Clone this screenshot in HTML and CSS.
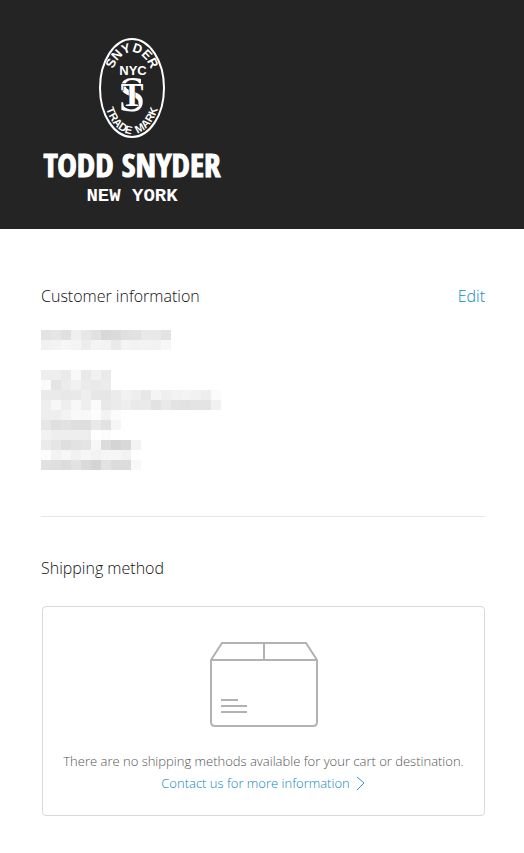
FILE: index.html
```html
<!DOCTYPE html>
<html lang="en">
<head>
    <meta charset="UTF-8">
    <meta name="viewport" content="width=device-width, initial-scale=1.0">
    <title>Todd Snyder - Checkout</title>
    <link rel="stylesheet" href="styles.css">
</head>
<body>
    <header class="banner">
        <a class="logo-link" href="#" aria-label="Todd Snyder New York">
            <svg class="logo" width="182" height="168" viewBox="0 0 182 168">
                <defs>
                    <path id="arc-top" d="M 68 50 A 22 36 0 0 1 112 50"></path>
                    <path id="arc-bottom" d="M 61 50 A 29 46 0 0 0 119 50"></path>
                </defs>
                <ellipse class="logo-ring" cx="90" cy="50" rx="32" ry="49"></ellipse>
                <text class="logo-arc-top"><textPath href="#arc-top" startOffset="50%">SNYDER</textPath></text>
                <text class="logo-nyc" x="91" y="37">NYC</text>
                <text class="logo-s" x="90" y="73">S</text>
                <text class="logo-t" x="90" y="68">T</text>
                <text class="logo-arc-bottom"><textPath href="#arc-bottom" startOffset="50%">TRADE&#160; MARK</textPath></text>
                <text class="logo-name" x="90" y="139">TODD SNYDER</text>
                <text class="logo-city" x="90" y="163">NEW YORK</text>
            </svg>
        </a>
    </header>

    <main class="content">
        <section class="customer">
            <div class="section-header">
                <h2>Customer information</h2>
                <a href="#">Edit</a>
            </div>
            <svg class="redacted" id="customer-email" width="180" height="20"></svg>
            <svg class="redacted" id="customer-address" width="180" height="100"></svg>
        </section>

        <section class="shipping">
            <h2>Shipping method</h2>
            <div class="blank-slate">
                <svg class="box-icon" width="108" height="86" viewBox="0 0 108 86">
                    <path d="M1 18 L12 1 H96 L107 18 V80 Q107 84 103 84 H5 Q1 84 1 80 Z M1 18 H107 M54 1 V18"></path>
                    <path d="M11 58 H28 M11 64 H37 M11 70 H37"></path>
                </svg>
                <p>There are no shipping methods available for your cart or destination.</p>
                <a class="contact-link" href="#">Contact us for more information
                    <svg class="chevron" width="10" height="16" viewBox="0 0 10 16">
                        <path d="M1 2 L8 8 L1 15"></path>
                    </svg>
                </a>
            </div>
        </section>
    </main>

    <script src="script.js"></script>
</body>
</html>
```

FILE: styles.css
```css
body {
    margin: 0;
    background-color: #fff;
    color: #111;
    font-family: "Open Sans", Lato, sans-serif;
    font-size: 13px;
    font-weight: 300;
    line-height: 22px;
}

a {
    color: #1088c0;
    text-decoration: none;
}

h2 {
    margin: 0;
    font-size: 16px;
    font-weight: 300;
    line-height: 24px;
}

.banner {
    background-color: #242424;
    padding: 38px 40px 23px 42px;
}

.logo-link,
.logo {
    display: block;
}

.logo {
    overflow: visible;
}

.logo text {
    fill: #fff;
    font-family: "Liberation Sans", Arial, sans-serif;
    font-weight: bold;
    text-anchor: middle;
}

.logo-ring {
    fill: none;
    stroke: #fff;
    stroke-width: 2;
}

.logo .logo-arc-top {
    font-size: 13px;
}

.logo .logo-arc-bottom {
    font-size: 11px;
}

.logo .logo-nyc {
    font-size: 13px;
}

.logo .logo-s {
    font-family: "Liberation Serif", serif;
    font-size: 50px;
    font-weight: normal;
}

.logo .logo-t {
    font-family: "Liberation Serif", serif;
    font-size: 34px;
    stroke: #242424;
    stroke-width: 1;
    paint-order: stroke;
}

.logo .logo-name {
    font-family: "Liberation Sans Narrow", "Open Sans Condensed", "Roboto Condensed", sans-serif;
    font-size: 33px;
    stroke: #fff;
    stroke-width: 1;
}

.logo .logo-city {
    font-family: "Liberation Mono", monospace;
    font-size: 19px;
}

.content {
    padding: 55px 39px 37px 41px;
}

.customer {
    border-bottom: 1px solid #e6e6e6;
    padding-bottom: 46px;
    margin-bottom: 39px;
}

.section-header {
    display: flex;
    justify-content: space-between;
    align-items: center;
    margin-bottom: 22px;
}

.section-header a {
    font-size: 16px;
}

.redacted {
    display: block;
    shape-rendering: crispEdges;
}

.redacted + .redacted {
    margin-top: 20px;
}

.blank-slate {
    display: flex;
    flex-direction: column;
    align-items: center;
    margin: 26px 0 0 1px;
    padding: 35px 12px 21px;
    border: 1px solid #d9d9d9;
    border-radius: 4px;
    color: #555;
    text-align: center;
}

.blank-slate p {
    margin: 22px 0 0;
}

.box-icon {
    fill: none;
    stroke: #b2b2b2;
    stroke-width: 2;
}

.contact-link {
    display: flex;
    align-items: center;
    gap: 6px;
}

.chevron {
    fill: none;
    stroke: #2a9dcc;
}
```

FILE: script.js
```js
// grey level of every 10px block, one string per line
const email = [
    'e3 e6 e0 f0 e7 e1 d8 db e0 e2 e9 e9 e3',
    'f1 f3 f6 f4 ed f4 f3 ea f4 f2 f3 f2 f7'
];

const address = [
    'ee ee ea f9 e9 f1 ea',
    'fa e4 eb f1 eb ea ec',
    'ea ea e8 e9 ee e7 e6 eb f2 ee e7 f4 ef f2 f4 f2 ee fb',
    'ee f7 ee f8 ee fa e8 eb ee e9 ea e2 e9 e3 e2 e4 e4 f1',
    'ee ee f3 f9 f8 fc f2 fb',
    'e6 df e2 df de e9 e2 f6',
    'f2 ee ee ee ed ff fc',
    'eb e5 df e2 e4 f7 dc d4 d8 f3',
    'fc f3 f7 f1 f6 f3 f6 f6 f2 fe',
    'e1 df dc e2 da d4 e2 dc dc f8'
];

function drawBlocks(id, rows) {
    const svg = document.getElementById(id);
    rows.forEach((row, y) => {
        row.split(' ').forEach((grey, x) => {
            const rect = document.createElementNS('http://www.w3.org/2000/svg', 'rect');
            rect.setAttribute('x', x * 10);
            rect.setAttribute('y', y * 10);
            rect.setAttribute('width', 10);
            rect.setAttribute('height', 10);
            rect.setAttribute('fill', '#' + grey + grey + grey);
            svg.appendChild(rect);
        });
    });
}

drawBlocks('customer-email', email);
drawBlocks('customer-address', address);
```
